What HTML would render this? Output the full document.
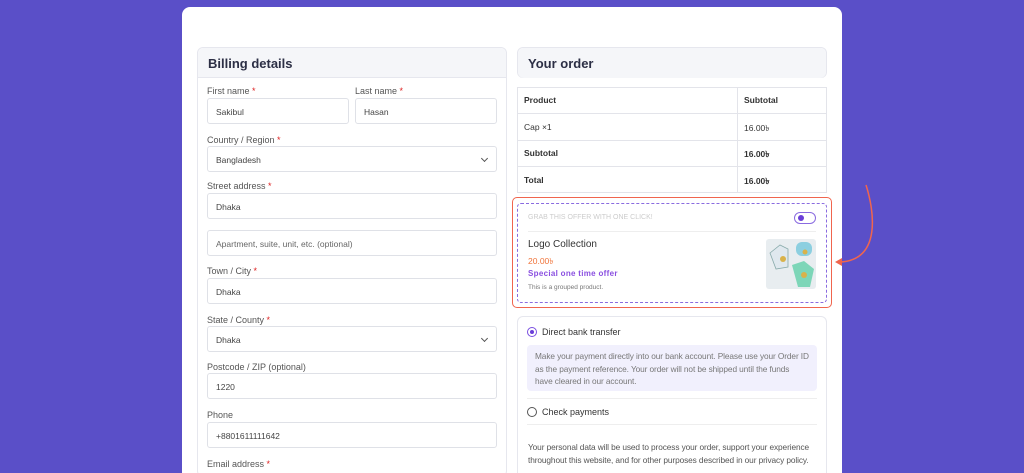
<!DOCTYPE html>
<html><head><meta charset="utf-8"><style>
*{box-sizing:border-box;margin:0;padding:0}
html{width:1024px;height:473px;overflow:hidden}
body{width:1024px;height:473px;overflow:hidden;background:#5a4fc8;font-family:"Liberation Sans",sans-serif;position:relative;color:#333}
.card{position:absolute;left:182px;top:7px;width:660px;height:470px;background:#fff;border-radius:8px 8px 0 0}
.abs{position:absolute}
.panel{position:absolute;border:1px solid #e6e7ee;border-radius:6px;background:#fff}
.ph{height:30px;background:#f5f6f9;border-bottom:1px solid #e6e7ee;border-radius:6px 6px 0 0;font-size:13px;font-weight:bold;color:#2c2f45;padding:8px 10px}
.lbl{position:absolute;font-size:9px;color:#555}
.lbl b{color:#d22;font-weight:normal}
.inp{position:absolute;height:26px;border:1px solid #dfe1e7;border-radius:3px;font-size:8.5px;color:#444;padding:8px 8px;background:#fff}
.sel:after{content:"";position:absolute;right:9px;top:9px;width:4px;height:4px;border-right:1px solid #555;border-bottom:1px solid #555;transform:rotate(45deg)}
.t{position:absolute;font-size:8.5px;color:#333}
</style></head><body>
<div class="card"></div>

<div class="panel" style="left:197px;top:47px;width:310px;height:430px"><div class="ph">Billing details</div></div>
<div class="lbl" style="left:207px;top:86px">First name <b>*</b></div>
<div class="lbl" style="left:355px;top:86px">Last name <b>*</b></div>
<div class="inp" style="left:207px;top:98px;width:142px">Sakibul</div>
<div class="inp" style="left:355px;top:98px;width:142px">Hasan</div>
<div class="lbl" style="left:207px;top:135px">Country / Region <b>*</b></div>
<div class="inp sel" style="left:207px;top:146px;width:290px">Bangladesh</div>
<div class="lbl" style="left:207px;top:181px">Street address <b>*</b></div>
<div class="inp" style="left:207px;top:193px;width:290px">Dhaka</div>
<div class="inp" style="left:207px;top:230px;width:290px;color:#666">Apartment, suite, unit, etc. (optional)</div>
<div class="lbl" style="left:207px;top:266px">Town / City <b>*</b></div>
<div class="inp" style="left:207px;top:278px;width:290px">Dhaka</div>
<div class="lbl" style="left:207px;top:315px">State / County <b>*</b></div>
<div class="inp sel" style="left:207px;top:326px;width:290px">Dhaka</div>
<div class="lbl" style="left:207px;top:362px">Postcode / ZIP (optional)</div>
<div class="inp" style="left:207px;top:373px;width:290px">1220</div>
<div class="lbl" style="left:207px;top:410px">Phone</div>
<div class="inp" style="left:207px;top:422px;width:290px">+8801611111642</div>
<div class="lbl" style="left:207px;top:459px">Email address <b>*</b></div>

<div class="panel" style="left:517px;top:47px;width:310px;height:31px"><div class="ph" style="border-bottom:none;border-radius:6px">Your order</div></div>
<div class="abs" style="left:517px;top:87px;width:310px;height:106px;border:1px solid #e3e4ea"></div>
<div class="abs" style="left:737px;top:87px;width:1px;height:106px;background:#e3e4ea"></div>
<div class="abs" style="left:517px;top:113px;width:310px;height:1px;background:#e3e4ea"></div>
<div class="abs" style="left:517px;top:140px;width:310px;height:1px;background:#e3e4ea"></div>
<div class="abs" style="left:517px;top:166px;width:310px;height:1px;background:#e3e4ea"></div>
<div class="t" style="left:524px;top:95px;font-weight:bold">Product</div>
<div class="t" style="left:744px;top:95px;font-weight:bold">Subtotal</div>
<div class="t" style="left:524px;top:122px">Cap ×1</div>
<div class="t" style="left:744px;top:122px">16.00৳</div>
<div class="t" style="left:524px;top:148px;font-weight:bold">Subtotal</div>
<div class="t" style="left:744px;top:148px;font-weight:bold">16.00৳</div>
<div class="t" style="left:524px;top:175px;font-weight:bold">Total</div>
<div class="t" style="left:744px;top:175px;font-weight:bold">16.00৳</div>

<div class="abs" style="left:512px;top:197px;width:320px;height:111px;border:1.5px solid #f0654e;border-radius:5px"></div>
<div class="abs" style="left:517px;top:203px;width:310px;height:100px;border:1px dashed #8a6be0;border-radius:4px"></div>
<div class="t" style="left:528px;top:214px;font-size:7px;color:#ccc">GRAB THIS OFFER WITH ONE CLICK!</div>
<div class="abs" style="left:794px;top:212px;width:22px;height:12px;border:1px solid #8a6be0;border-radius:7px"><div style="position:absolute;left:3px;top:2px;width:6px;height:6px;border-radius:50%;background:#6a3fd8"></div></div>
<div class="abs" style="left:528px;top:231px;width:288px;height:1px;background:#eee"></div>
<div class="t" style="left:528px;top:239px;font-size:10px;color:#333">Logo Collection</div>
<div class="t" style="left:528px;top:255px;color:#f0743a">20.00৳</div>
<div class="t" style="left:528px;top:269px;color:#8a4fe0;font-weight:bold;font-size:8px;letter-spacing:.3px">Special one time offer</div>
<div class="t" style="left:528px;top:284px;font-size:6.5px;color:#777">This is a grouped product.</div>
<div class="abs" style="left:766px;top:239px;width:50px;height:50px;background:#e8edf0;border-radius:3px">
<svg width="50" height="50"><path d="M4 14 L14 6 L22 10 L22 28 L10 30 Z" fill="#dfe8ee" stroke="#8aa" stroke-width=".8"/><rect x="30" y="3" width="16" height="14" rx="6" fill="#8ccfe0"/><path d="M26 26 L38 22 L48 30 L44 48 L32 48 Z" fill="#7dd6b8"/><circle cx="17" cy="20" r="3" fill="#d9b24a"/><circle cx="39" cy="13" r="2.5" fill="#d9b24a"/><circle cx="38" cy="36" r="3" fill="#d9b24a"/></svg></div>

<svg class="abs" style="left:830px;top:180px" width="60" height="90"><path d="M36 5 C44 30 52 80 10 82" fill="none" stroke="#f0654e" stroke-width="1.5"/><path d="M5 82 L12 78 L12 86 Z" fill="#f0654e"/></svg>

<div class="panel" style="left:517px;top:316px;width:310px;height:170px"></div>
<div class="abs" style="left:527px;top:327px;width:10px;height:10px;border:1px solid #7a4fe0;border-radius:50%"><div style="position:absolute;left:2px;top:2px;width:4px;height:4px;border-radius:50%;background:#6a3fd8"></div></div>
<div class="t" style="left:542px;top:327px;font-size:9px">Direct bank transfer</div>
<div class="abs" style="left:527px;top:345px;width:290px;height:46px;background:#f1f0fd;border-radius:4px;font-size:8.3px;color:#777;padding:5px 8px;line-height:12.5px;letter-spacing:-.1px">Make your payment directly into our bank account. Please use your Order ID as the payment reference. Your order will not be shipped until the funds have cleared in our account.</div>
<div class="abs" style="left:527px;top:398px;width:290px;height:1px;background:#eee"></div>
<div class="abs" style="left:527px;top:407px;width:10px;height:10px;border:1px solid #555;border-radius:50%"></div>
<div class="t" style="left:542px;top:407px;font-size:9px">Check payments</div>
<div class="abs" style="left:527px;top:424px;width:290px;height:1px;background:#eee"></div>
<div class="abs" style="left:528px;top:441px;width:285px;font-size:8.3px;color:#555;line-height:13px;letter-spacing:-.1px">Your personal data will be used to process your order, support your experience throughout this website, and for other purposes described in our privacy policy.</div>
</body></html>
